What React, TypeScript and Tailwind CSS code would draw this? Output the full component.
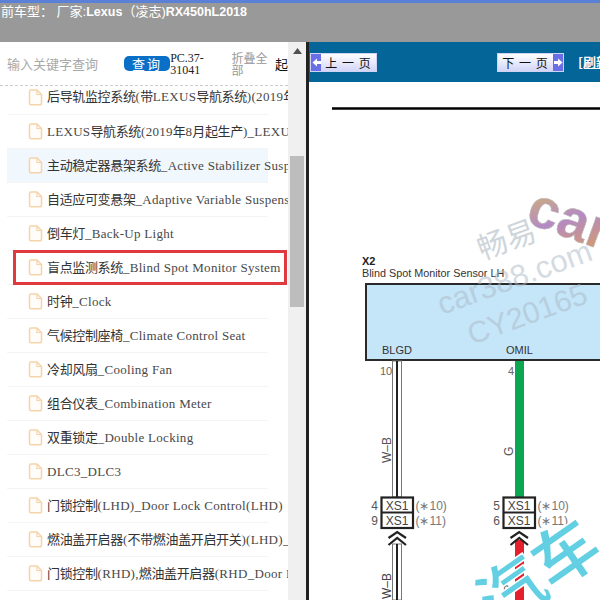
const rows = [
  '后导轨监控系统(带LEXUS导航系统)(2019年8月起生产)_Rear View Monitor',
  'LEXUS导航系统(2019年8月起生产)_LEXUS Navigation System',
  '主动稳定器悬架系统_Active Stabilizer Suspension System',
  '自适应可变悬架_Adaptive Variable Suspension System',
  '倒车灯_Back-Up Light',
  '盲点监测系统_Blind Spot Monitor System',
  '时钟_Clock',
  '气候控制座椅_Climate Control Seat',
  '冷却风扇_Cooling Fan',
  '组合仪表_Combination Meter',
  '双重锁定_Double Locking',
  'DLC3_DLC3',
  '门锁控制(LHD)_Door Lock Control(LHD)',
  '燃油盖开启器(不带燃油盖开启开关)(LHD)_Fuel Lid Opener',
  '门锁控制(RHD),燃油盖开启器(RHD_Door Lock Control',
];

function FileIcon() {
  return (
    <svg width="15" height="17" viewBox="0 0 15 17" fill="none" className="shrink-0">
      <path d="M1.5 2.5 Q1.5 1 3 1 H9 L13.5 5.5 V14 Q13.5 15.8 11.8 15.8 H3 Q1.5 15.8 1.5 14 Z" fill="#fffdf9" stroke="#f6d3a8" strokeWidth="1.5" />
      <path d="M9 1 V5.5 H13.5" stroke="#f6d3a8" strokeWidth="1.2" />
    </svg>
  );
}

function Row({ text, index }: { text: string; index: number }) {
  const hi = index === 2;
  const first = index === 0;
  const boxed = index === 5;
  const parts = text.split(/([\u4e00-\u9fff]+)/).filter(Boolean);
  return (
    <div
      className={`relative ml-[7px] flex w-[261px] items-center gap-[4px] border-b border-[#f4f4f4] pl-[21px] whitespace-nowrap ${first ? 'h-[29px] pb-[6px]' : 'h-[34px]'} ${hi ? 'bg-[#f0f7fd]' : ''}`}
    >
      <FileIcon />
      <span className="text-[13px] text-[#484848]">
        {parts.map((p, i) =>
          /[\u4e00-\u9fff]/.test(p) ? (
            <span key={i} className="tracking-[-0.35px] text-[#333]">{p}</span>
          ) : (
            <span key={i} className="tracking-[0.3px]">{p}</span>
          ),
        )}
      </span>
      {boxed && <div className="absolute top-[-1px] left-[6px] h-[35px] w-[274px] border-[3px] border-[#e03a40]" />}
    </div>
  );
}

function Diagram() {
  const sans = '"Liberation Sans", sans-serif';
  const cjk = '"Noto Sans CJK SC", sans-serif';
  const connector = (x: number, a: string, b: string) => (
    <g fontFamily={sans}>
      <rect x={x} y="497.5" width="31.5" height="30.5" fill="#fff" stroke="#222" strokeWidth="2.2" />
      <line x1={x} x2={x + 31.5} y1="512.5" y2="512.5" stroke="#222" strokeWidth="2" />
      <text x={x + 15.7} y="510" fontSize="12" textAnchor="middle" fill="#444">XS1</text>
      <text x={x + 15.7} y="524.5" fontSize="12" textAnchor="middle" fill="#444">XS1</text>
      <text x={x - 7} y="510" fontSize="12" textAnchor="middle" fill="#555">{a}</text>
      <text x={x - 7} y="524.5" fontSize="12" textAnchor="middle" fill="#555">{b}</text>
      <text x={x + 34} y="510" fontSize="12" fill="#777">(∗10)</text>
      <text x={x + 34} y="524.5" fontSize="12" fill="#777">(∗11)</text>
      <path d={`M${x + 7} 538 L${x + 15.7} 532 L${x + 24.5} 538 M${x + 7} 545 L${x + 15.7} 538 L${x + 24.5} 545`} fill="none" stroke="#222" strokeWidth="2.2" />
    </g>
  );
  return (
    <svg viewBox="309 82 291 518" width="291" height="518" className="block">
      <defs>
        <linearGradient id="carG" x1="0" y1="0" x2="1" y2="1">
          <stop offset="0" stopColor="#d9c05a" />
          <stop offset="0.5" stopColor="#b48ac4" />
          <stop offset="1" stopColor="#e0a050" />
        </linearGradient>
      </defs>
      <line x1="332" x2="600" y1="108.5" y2="108.5" stroke="#000" strokeWidth="2.5" />
      <text x="362" y="265" fontFamily={sans} fontSize="11" fontWeight="700" fill="#222">X2</text>
      <text x="362" y="277" fontFamily={sans} fontSize="10.8" fill="#333">Blind Spot Monitor Sensor LH</text>
      <rect x="366" y="284" width="250" height="76" fill="#c5e5f8" stroke="#2a2a2a" strokeWidth="2" />
      <text x="382" y="354" fontFamily={sans} fontSize="11" fill="#333">BLGD</text>
      <text x="506" y="354" fontFamily={sans} fontSize="11" fill="#333">OMIL</text>
      <text x="380" y="375" fontFamily={sans} fontSize="11" fill="#666">10</text>
      <text x="508" y="375" fontFamily={sans} fontSize="11" fill="#666">4</text>

      <rect x="392.5" y="361" width="9" height="136" fill="#fff" stroke="#777" strokeWidth="1" />
      <rect x="396" y="361" width="2" height="136" fill="#222" />
      <rect x="392.5" y="544" width="9" height="56" fill="#fff" stroke="#777" strokeWidth="1" />
      <rect x="396" y="544" width="2" height="56" fill="#222" />
      <rect x="515" y="361" width="9" height="136" fill="#0ca750" />
      <rect x="515" y="540" width="9" height="60" fill="#e3202c" />

      <text transform="translate(391 463) rotate(-90)" fontFamily={sans} fontSize="12" fill="#555">W–B</text>
      <text transform="translate(391 599) rotate(-90)" fontFamily={sans} fontSize="12" fill="#444">W–B</text>
      <text transform="translate(513 456) rotate(-90)" fontFamily={sans} fontSize="12" fill="#555">G</text>
      <text transform="translate(513 593) rotate(-90)" fontFamily={sans} fontSize="12" fill="#555">R</text>

      {connector(381.5, '4', '9')}
      {connector(503.5, '5', '6')}

      <text transform="translate(482 260) rotate(-20)" fontFamily={cjk} fontSize="30" fill="#c3ccd3" opacity="0.8">畅易</text>
      <text transform="translate(442 315) rotate(-20)" fontFamily={sans} fontSize="31" fill="#aab9c6" opacity="0.5">car388.com</text>
      <text transform="translate(472 345) rotate(-20)" fontFamily={sans} fontSize="30" fill="#aab9c6" opacity="0.5">CY20165</text>
      <text transform="translate(524 222) rotate(20)" fontFamily={sans} fontSize="56" fontWeight="700" fill="url(#carG)" stroke="#bbb" strokeWidth="0.6">car</text>
      <text transform="translate(498 630) rotate(-35)" fontFamily={cjk} fontSize="66" fontWeight="700" fill="#62d0e2" stroke="#fff" strokeWidth="1.5">汽车</text>
    </svg>
  );
}

function NavButton({ label, next }: { label: string; next?: boolean }) {
  const arrow = (
    <span className="flex h-full w-[10px] items-center justify-center bg-[#6b6fe6]">
      <svg width="9" height="9" viewBox="0 0 9 9">
        {next ? <path d="M0 3 H4 V0.5 L8.5 4.5 L4 8.5 V6 H0 Z" fill="#fff" /> : <path d="M9 3 H5 V0.5 L0.5 4.5 L5 8.5 V6 H9 Z" fill="#fff" />}
      </svg>
    </span>
  );
  return (
    <div className="flex h-[19px] w-[67px] shrink-0 items-center border border-[#cfd4f5] bg-gradient-to-b from-[#ffffff] to-[#d3d5f7]">
      {!next && arrow}
      <span className="flex-1 text-center font-['Noto_Sans_CJK_SC',sans-serif] text-[12px] leading-[17px] tracking-[1px] whitespace-nowrap text-[#111]">{label}</span>
      {next && arrow}
    </div>
  );
}

export default function App() {
  return (
    <div className="flex h-[600px] w-[600px] flex-col overflow-hidden bg-white font-['Liberation_Serif','Noto_Sans_CJK_SC',serif]">
      <div className="h-[42px] shrink-0 border-t-[3px] border-[#5b80d8] bg-[#999999] pl-[1px] font-['Liberation_Sans','Noto_Sans_CJK_SC',sans-serif] text-[13px] leading-[17px] whitespace-nowrap text-white">
        前车型： 厂家:<span className="text-[12.5px] font-bold">Lexus</span>（凌志)<span className="text-[12.5px] font-bold">RX450hL2018</span>
      </div>
      <div className="flex min-h-0 flex-1">
        <div className="w-[288px] shrink-0 overflow-hidden">
          <div className="flex h-[44px] w-[288px] items-center border-b border-dashed border-[#cccccc] pl-[7px]">
            <span className="w-[118px] font-['Noto_Sans_CJK_SC',sans-serif] text-[13px] whitespace-nowrap text-[#a8a8a8]">输入关键字查询</span>
            <span className="flex h-[15px] w-[47px] items-center justify-center rounded-[5px] bg-[#0a6fc6] font-['Noto_Sans_CJK_SC',sans-serif] text-[13px] tracking-[2px] text-white">查询</span>
            <span className="w-[62px] text-[12px] leading-[12px] text-[#222]">PC.37-<br />31041</span>
            <span className="w-[44px] font-['Noto_Sans_CJK_SC',sans-serif] text-[12px] leading-[12px] text-[#999]">折叠全<br />部</span>
            <span className="font-['Noto_Sans_CJK_SC',sans-serif] text-[13px] text-[#111]">起</span>
          </div>
          {rows.map((r, i) => (
            <Row key={r} text={r} index={i} />
          ))}
        </div>
        <div className="flex w-[18px] shrink-0 flex-col items-center bg-[#f0f0f0]">
          <svg width="9" height="6" viewBox="0 0 9 6" className="mt-[6px] mb-[102px]"><path d="M4.5 0 L9 6 H0 Z" fill="#505050" /></svg>
          <div className="h-[151px] w-[14px] bg-[#bdbdbd]" />
        </div>
        <div className="w-[3px] shrink-0 bg-[#222]" />
        <div className="min-w-0 flex-1 overflow-hidden">
          <div className="flex h-[40px] items-center bg-[#046599] pl-[1px]">
            <NavButton label="上 一 页" />
            <span className="w-[120px] shrink-0" />
            <NavButton label="下 一 页" next />
            <span className="ml-[14px] shrink-0 font-['Noto_Sans_CJK_SC',sans-serif] text-[13px] font-bold whitespace-nowrap text-white underline">[刷新]</span>
          </div>
          <Diagram />
        </div>
      </div>
    </div>
  );
}
